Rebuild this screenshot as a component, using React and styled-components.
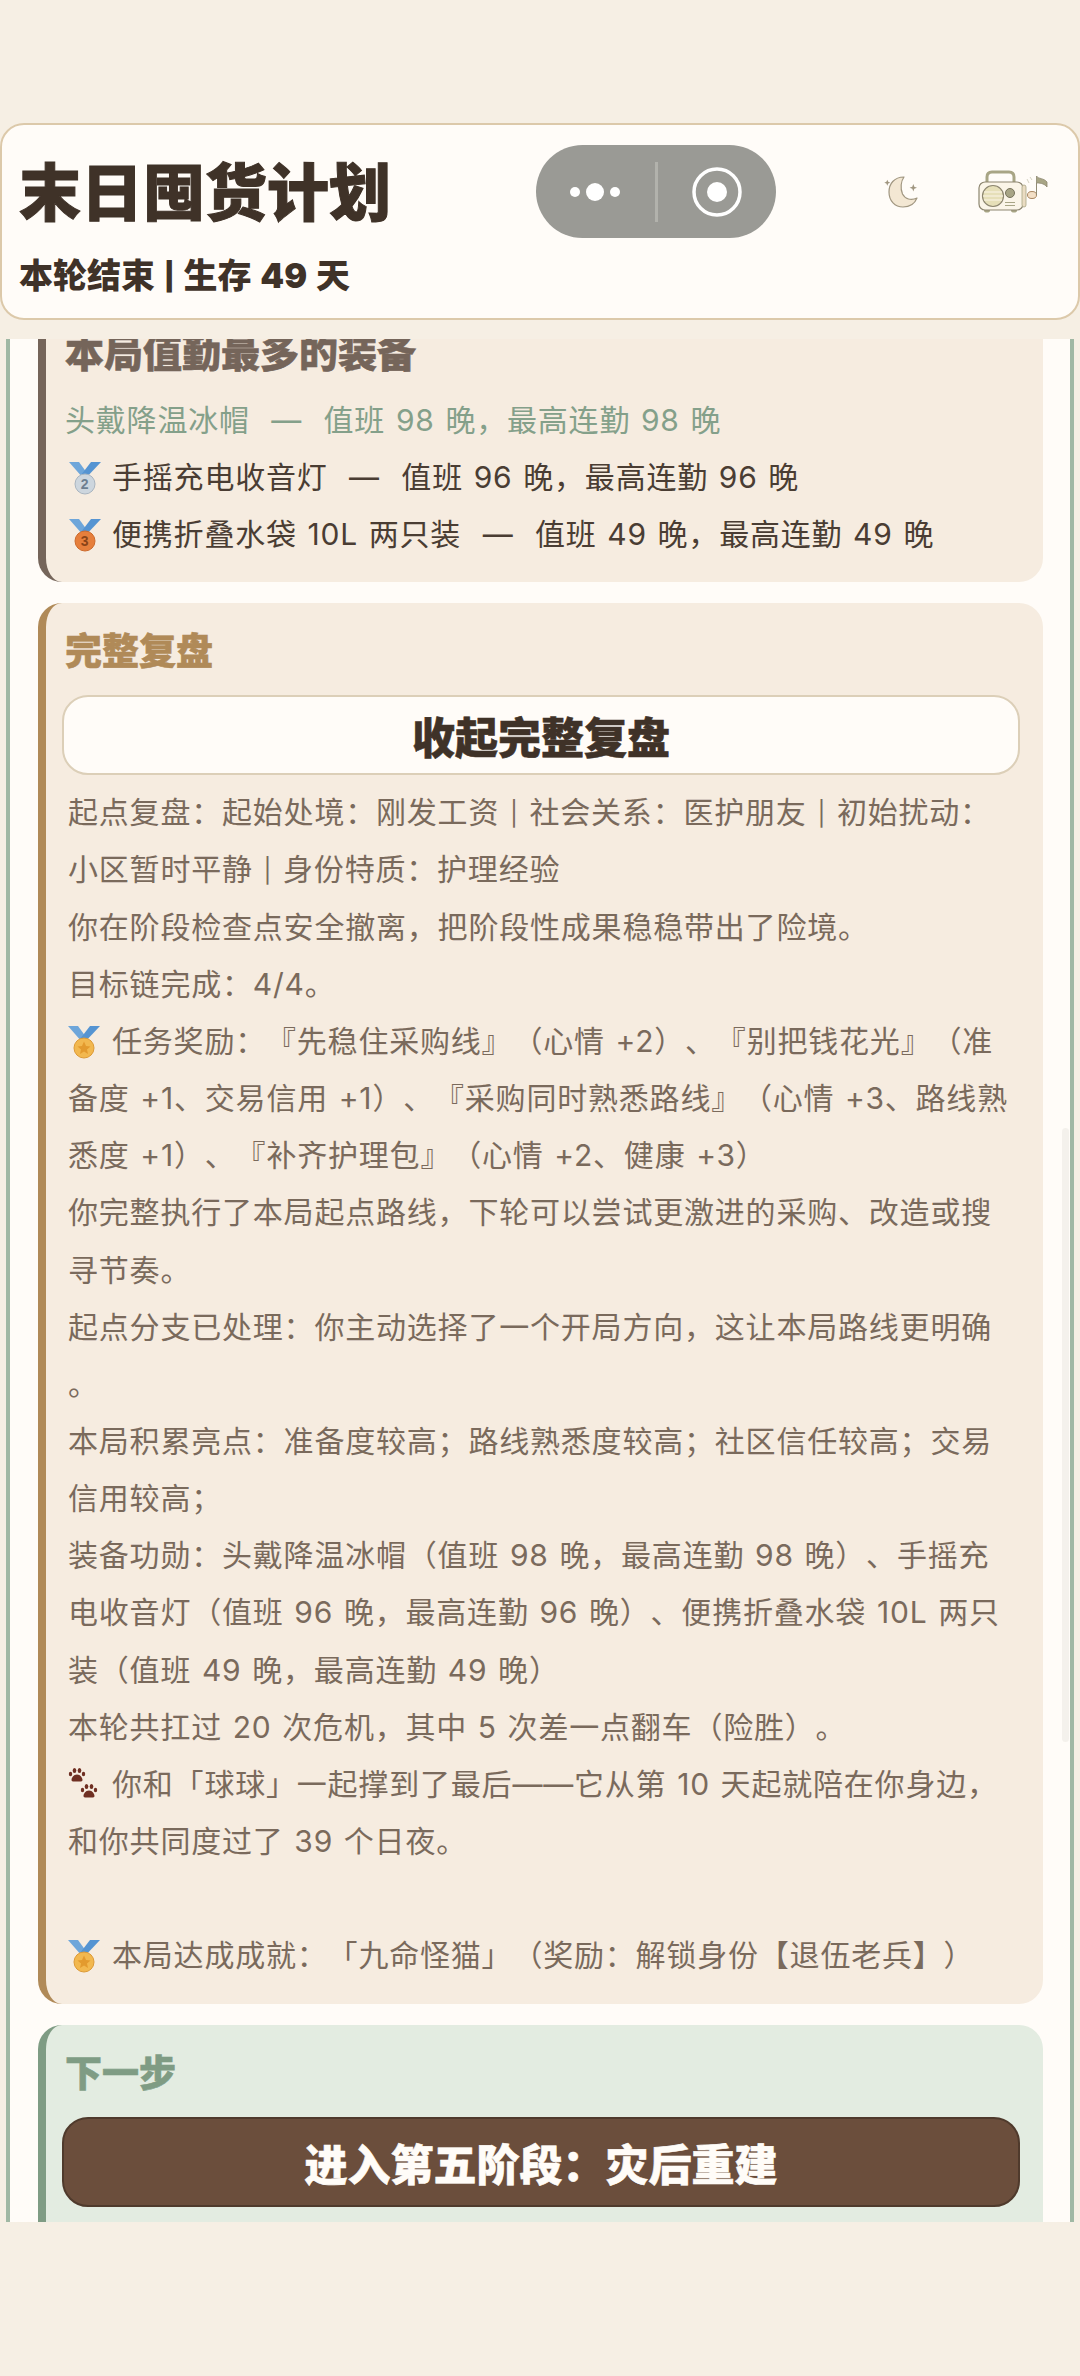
import React from 'react';
import styled, { createGlobalStyle } from 'styled-components';

const GlobalStyle = createGlobalStyle`
  html, body { margin: 0; padding: 0; background: #f6efe4; }
  * { box-sizing: border-box; }
`;

const Page = styled.div`
  width: 1080px;
  height: 2376px;
  overflow: hidden;
  display: flex;
  flex-direction: column;
  padding-top: 123px;
  background: #f6efe4;
  font-family: Inter, "Noto Sans CJK SC", "Noto Sans", sans-serif;
  text-spacing-trim: space-all;
`;

const Header = styled.header`
  position: relative;
  flex: none;
  height: 197px;
  padding: 30px 17px 0;
  background: #fffcf8;
  border: 2px solid #dcc9aa;
  border-radius: 24px;
`;

const GameTitle = styled.h1`
  margin: 0;
  font-size: 62px;
  line-height: 78px;
  font-weight: 900;
  -webkit-text-stroke: 1px #3f3228;
  color: #3f3228;
`;

const RoundInfo = styled.div`
  margin-top: 21px;
  font-size: 34px;
  line-height: 44px;
  font-weight: 900;
  word-spacing: 2px;
  color: #3f3228;
  white-space: pre;
`;

const Pipe = styled.span`
  font-size: 0.8em;
  vertical-align: 0.06em;
`;

const Capsule = styled.div`
  position: absolute;
  left: 534px;
  top: 20px;
  width: 240px;
  height: 93px;
  border-radius: 47px;
  background: #9a9a95;
  display: flex;
  align-items: center;
`;

const CapsuleSide = styled.div`
  flex: 1;
  height: 100%;
  display: flex;
  align-items: center;
  justify-content: center;
`;

const CapsuleLine = styled.div`
  flex: none;
  width: 3px;
  height: 60px;
  background: #b2b2ac;
`;

const HeaderIcons = styled.div`
  position: absolute;
  right: 30px;
  top: 45px;
  display: flex;
  align-items: center;
  gap: 60px;
`;

const Viewport = styled.main`
  position: relative;
  flex: none;
  height: 1883px;
  margin-top: 19px;
  padding: 0 6px;
  overflow: hidden;
`;

const Panel = styled.div`
  height: 100%;
  padding: 0 27px 0 28px;
  background: #fffcf8;
  border-left: 4px solid #a0b8a4;
  border-right: 4px solid #a0b8a4;
  overflow: hidden;
`;

const Stack = styled.div`
  margin-top: -35px;
  display: flex;
  flex-direction: column;
  gap: 21px;
`;

const Card = styled.section`
  padding: 24px 23px ${p => p.$bottom || 18}px 16px;
  border-left: 8px solid ${p => p.$accent};
  border-radius: 24px;
  background: ${p => p.$bg || '#f6ece0'};
`;

const CardTitle = styled.h2`
  margin: 0;
  padding-left: 3px;
  font-size: ${p => p.$size || 37}px;
  line-height: 50px;
  font-weight: 900;
  -webkit-text-stroke: 0.6px ${p => p.$color};
  color: ${p => p.$color};
`;

const Rows = styled.div`
  padding-left: ${p => p.$indent || 0}px;
  margin-top: ${p => p.$top || 0}px;
`;

const Row = styled.div`
  font-size: 30px;
  line-height: 57px;
  height: 57.15px;
  letter-spacing: 0.8px;
  word-spacing: 1.5px;
  color: ${p => p.$color || '#7a6a5c'};
  white-space: pre;
  display: flex;
  align-items: center;
`;

const Glyph = styled.span`
  flex: none;
  width: ${p => p.$width || 44}px;
  height: 36px;
  padding-left: ${p => p.$lead || 0}px;
  display: flex;
  align-items: center;
`;

const ActionButton = styled.button`
  display: block;
  width: 100%;
  height: ${p => p.$height}px;
  margin-top: 18px;
  border-radius: 26px;
  border: 2px solid ${p => p.$border};
  background: ${p => p.$bg};
  color: ${p => p.$color};
  font-family: inherit;
  font-size: 43px;
  font-weight: 900;
  -webkit-text-stroke: 0.6px ${p => p.$color};
  padding: 0;
`;

const ScrollThumb = styled.div`
  position: absolute;
  right: 11px;
  top: 789px;
  width: 7px;
  height: 614px;
  border-radius: 4px;
  background: rgba(60, 60, 50, 0.06);
`;

const Dots = () => (
  <svg width="52" height="20" viewBox="0 0 52 20">
    <circle cx="6" cy="10" r="5" fill="#fff" />
    <circle cx="26" cy="10" r="9" fill="#fff" />
    <circle cx="46" cy="10" r="5" fill="#fff" />
  </svg>
);

const Target = () => (
  <svg width="52" height="52" viewBox="0 0 52 52">
    <circle cx="26" cy="26" r="23" fill="none" stroke="#fff" strokeWidth="3.500" />
    <circle cx="26" cy="26" r="10" fill="#fff" />
  </svg>
);

const Moon = () => (
  <svg width="34" height="33" viewBox="0 0 34 33">
    <path
      d="M20 1 C10 1 5 8 5 16 C5 25 11 31 19 31 C26 31 31 27 33 22 C27 25 21 23 18.500 18 C16 12 17 5 20 1 Z"
      fill="#f3e7d3"
      stroke="#a09680"
      strokeWidth="1.200"
      strokeLinejoin="round"
    />
    <path d="M3.300 3.700 L4.200 5.800 L6.300 6.700 L4.200 7.600 L3.300 9.700 L2.400 7.600 L0.300 6.700 L2.400 5.800 Z" fill="#a09680" />
    <path d="M29.300 8 L30.300 10.700 L33 11.700 L30.300 12.700 L29.300 15.400 L28.300 12.700 L25.600 11.700 L28.300 10.700 Z" fill="#a09680" />
  </svg>
);

const Radio = () => (
  <svg width="70" height="44" viewBox="0 0 70 44">
    <path d="M9 13 V7 Q9 2 14 2 H31 Q36 2 36 7 V13" fill="none" stroke="#a8a585" strokeWidth="3" />
    <ellipse cx="9" cy="40.500" rx="3" ry="2" fill="#a8a585" />
    <ellipse cx="36" cy="40.500" rx="3" ry="2" fill="#a8a585" />
    <rect x="1" y="12" width="44" height="28" rx="6" fill="#fbf5e8" stroke="#8d8670" strokeWidth="1.200" />
    <rect x="44" y="15" width="4" height="22" rx="2" fill="#eadcc2" stroke="#a8a585" strokeWidth="0.800" />
    <circle cx="15" cy="26" r="10.500" fill="#e6dfb8" stroke="#8d8670" strokeWidth="1.200" />
    <path d="M6 22 H24 M5 26 H25 M6 30 H24" stroke="#fbf5e8" strokeWidth="1.200" />
    <circle cx="32" cy="23" r="4.500" fill="#a8a585" stroke="#77735c" strokeWidth="1" />
    <path d="M27 32.500 H37 M27 35.500 H37" stroke="#a8a585" strokeWidth="1" />
    <path d="M49 9 L51 13 M52 7 L54 10" stroke="#c9c6b4" strokeWidth="0.800" />
    <ellipse cx="54" cy="25" rx="4.500" ry="3.500" fill="#f3dfc6" stroke="#a8855f" strokeWidth="1" />
    <path d="M58.500 25 V6 C60 9 66 8 69 12 V17 C66 13 61 13 58.500 13 Z" fill="#a8a585" stroke="#8d8670" strokeWidth="0.800" />
  </svg>
);

const medalColors = {
  1: { disc: '#f2b84f', ring: '#dd9a36', mark: '#e39a2e' },
  2: { disc: '#cdd6de', ring: '#a9b5c0', mark: '#6d7f90' },
  3: { disc: '#e67f3c', ring: '#cc6a2c', mark: '#8a4418' },
};

const Medal = ({ place }) => {
  const c = medalColors[place];
  return (
    <svg width="32" height="34" viewBox="0 0 32 34">
      <path d="M0 1 H10 L18 12 L14 17 Z" fill="#6ea6da" />
      <path d="M32 1 H22 L12 14 L16 18 Z" fill="#5594d2" />
      <circle cx="16" cy="23" r="10" fill={c.disc} stroke={c.ring} strokeWidth="1" />
      {place === 1 ? (
        <path
          d="M16 16.500 L18 21 L22.500 21.500 L19 24.500 L20 29 L16 26.500 L12 29 L13 24.500 L9.500 21.500 L14 21 Z"
          fill={c.mark}
        />
      ) : (
        <text x="16" y="28" fontSize="14" fontWeight="700" textAnchor="middle" fill={c.mark} fontFamily="Liberation Sans, sans-serif">
          {place}
        </text>
      )}
    </svg>
  );
};

const Paw = ({ x, y }) => (
  <g transform={`translate(${x} ${y})`} fill="#6f2f22">
    <ellipse cx="2.500" cy="6" rx="1.700" ry="2.300" />
    <ellipse cx="6.500" cy="2.500" rx="1.800" ry="2.500" />
    <ellipse cx="11.500" cy="2.500" rx="1.800" ry="2.500" />
    <ellipse cx="15.500" cy="6" rx="1.700" ry="2.300" />
    <path d="M9 6.500 C12.500 6.500 14.500 10 14.500 12 C14.500 14 12 13.500 9 13.500 C6 13.500 3.500 14 3.500 12 C3.500 10 5.500 6.500 9 6.500 Z" />
  </g>
);

const Paws = () => (
  <svg width="32" height="32" viewBox="0 0 32 32">
    <Paw x={0} y={0} />
    <Paw x={12} y={16} />
  </svg>
);

const reviewLines = [
  { text: <span>起点复盘：起始处境：刚发工资 <Pipe>|</Pipe> 社会关系：医护朋友 <Pipe>|</Pipe> 初始扰动：</span> },
  { text: <span>小区暂时平静 <Pipe>|</Pipe> 身份特质：护理经验</span> },
  { text: '你在阶段检查点安全撤离，把阶段性成果稳稳带出了险境。' },
  { text: '目标链完成：4/4。' },
  { text: '任务奖励：『先稳住采购线』（心情 +2）、『别把钱花光』（准', icon: <Medal place={1} /> },
  { text: '备度 +1、交易信用 +1）、『采购同时熟悉路线』（心情 +3、路线熟' },
  { text: '悉度 +1）、『补齐护理包』（心情 +2、健康 +3）' },
  { text: '你完整执行了本局起点路线，下轮可以尝试更激进的采购、改造或搜' },
  { text: '寻节奏。' },
  { text: '起点分支已处理：你主动选择了一个开局方向，这让本局路线更明确' },
  { text: '。' },
  { text: '本局积累亮点：准备度较高；路线熟悉度较高；社区信任较高；交易' },
  { text: '信用较高；' },
  { text: '装备功勋：头戴降温冰帽（值班 98 晚，最高连勤 98 晚）、手摇充' },
  { text: '电收音灯（值班 96 晚，最高连勤 96 晚）、便携折叠水袋 10L 两只' },
  { text: '装（值班 49 晚，最高连勤 49 晚）' },
  { text: '本轮共扛过 20 次危机，其中 5 次差一点翻车（险胜）。' },
  { text: '你和「球球」一起撑到了最后——它从第 10 天起就陪在你身边，', icon: <Paws /> },
  { text: '和你共同度过了 39 个日夜。' },
  { text: ' ' },
  { text: '本局达成成就：「九命怪猫」（奖励：解锁身份【退伍老兵】）', icon: <Medal place={1} /> },
];

export default function App() {
  return (
    <Page>
      <GlobalStyle />
      <Header>
        <GameTitle>末日囤货计划</GameTitle>
        <RoundInfo>本轮结束 <Pipe>|</Pipe> 生存 49 天</RoundInfo>
        <Capsule>
          <CapsuleSide><Dots /></CapsuleSide>
          <CapsuleLine />
          <CapsuleSide><Target /></CapsuleSide>
        </Capsule>
        <HeaderIcons>
          <Moon />
          <Radio />
        </HeaderIcons>
      </Header>
      <Viewport>
        <Panel>
          <Stack>
            <Card $accent="#75655a" $bottom={19}>
              <CardTitle $size={39} $color="#75655a">本局值勤最多的装备</CardTitle>
              <Rows $indent={3} $top={14}>
                <Row $color="#84a08a">{'头戴降温冰帽  —  值班 98 晚，最高连勤 98 晚'}</Row>
                <Row $color="#4a3d33"><Glyph $width={47} $lead={4}><Medal place={2} /></Glyph>{'手摇充电收音灯  —  值班 96 晚，最高连勤 96 晚'}</Row>
                <Row $color="#4a3d33"><Glyph $width={47} $lead={4}><Medal place={3} /></Glyph>{'便携折叠水袋 10L 两只装  —  值班 49 晚，最高连勤 49 晚'}</Row>
              </Rows>
            </Card>
            <Card $accent="#b08a58" $bottom={20}>
              <CardTitle $color="#b08a58">完整复盘</CardTitle>
              <ActionButton $height={80} $border="#dccfb8" $bg="#fffcf8" $color="#3f3228" type="button">收起完整复盘</ActionButton>
              <Rows $indent={6} $top={9}>
                {reviewLines.map((line, i) => (
                  <Row key={i}>
                    {line.icon && <Glyph>{line.icon}</Glyph>}
                    {line.text}
                  </Row>
                ))}
              </Rows>
            </Card>
            <Card $accent="#7f9c84" $bg="#e3ece1" $bottom={60}>
              <CardTitle $color="#7f9c84">下一步</CardTitle>
              <ActionButton $height={90} $border="#4f3a2c" $bg="#6b4e3c" $color="#fffcf8" type="button">进入第五阶段：灾后重建</ActionButton>
            </Card>
          </Stack>
        </Panel>
        <ScrollThumb />
      </Viewport>
    </Page>
  );
}
